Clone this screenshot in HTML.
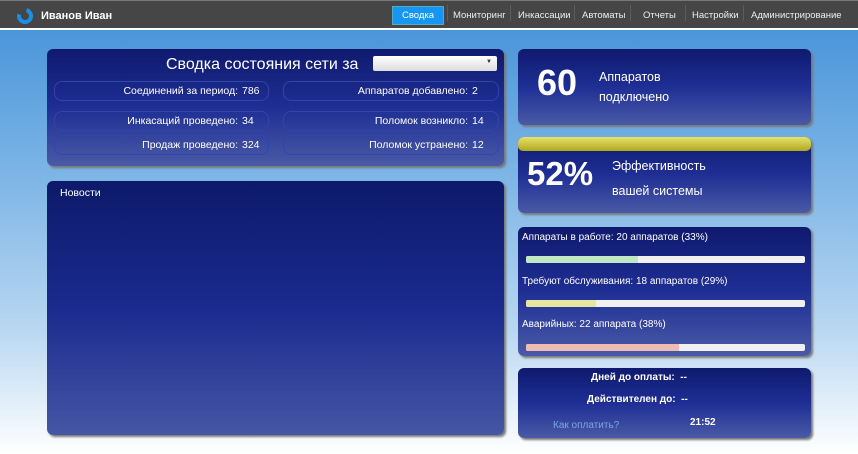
<!DOCTYPE html>
<html><head><meta charset="utf-8"><style>
*{margin:0;padding:0;box-sizing:border-box}
body{width:858px;height:454px;overflow:hidden;font-family:"Liberation Sans","DejaVu Sans",sans-serif;background:linear-gradient(#4b95d9 30px,#7fb6e6 180px,#b9d7f1 330px,#ffffff 454px);position:relative;color:#fff}
.hdr{position:absolute;left:0;top:0;width:858px;height:30px;background:#464646;border-top:1px solid #777;border-bottom:2px solid #fff}
.logo{position:absolute;left:17px;top:7px;width:16px;height:16px;border-radius:50%;border:4px solid #1a8fe6;border-top-color:transparent;transform:rotate(-30deg)}
.name{position:absolute;left:41px;top:9px;font-size:11px;font-weight:bold}
.nav{position:absolute;top:6px;font-size:9.5px;color:#eee}
.nav span{position:absolute;white-space:nowrap;top:4px}
.sep{position:absolute;top:5px;width:1px;height:16px;background:#5c5c5c}
.act{position:absolute;left:392px;top:6px;width:52px;height:19px;background:#1596f2;border:1px solid #5ab;font-size:9.5px;text-align:center;line-height:17px}
.panel{position:absolute;border-radius:6px;background:linear-gradient(#0f1a6e,#1e2e94 50%,#4a5aa6);box-shadow:2px 2px 2px #777}
.cell{position:absolute;height:20px;border:1px solid #3344aa;border-radius:8px;font-size:10.5px;text-align:right;padding-right:30px;line-height:18px}
.cell b{position:absolute;right:6px;font-weight:normal;width:20px;text-align:left}
.bar{position:absolute;left:8px;width:279px;height:7px;background:#f0f0f0;border-radius:2px;overflow:hidden}
.bar i{display:block;height:100%}
.t{position:absolute;font-size:10px;white-space:nowrap}
</style></head><body>
<div class="hdr">
<div class="logo"></div><div class="name">Иванов Иван</div>
</div>
<div class="act">Сводка</div>
<div class="nav" style="left:0"><span style="left:453px">Мониторинг</span><span style="left:518px">Инкассации</span><span style="left:582px">Автоматы</span><span style="left:643px">Отчеты</span><span style="left:692px">Настройки</span><span style="left:751px">Администрирование</span></div>
<div class="sep" style="left:447px"></div><div class="sep" style="left:510px"></div><div class="sep" style="left:574px"></div><div class="sep" style="left:630px"></div><div class="sep" style="left:685px"></div><div class="sep" style="left:743px"></div>

<div class="panel" style="left:47px;top:49px;width:457px;height:117px">
<div class="t" style="left:119px;top:7px;font-size:16px">Сводка состояния сети за</div>
<div style="position:absolute;left:326px;top:7px;width:124px;height:15px;background:linear-gradient(#fff,#ddd);border-radius:2px"><span style="position:absolute;right:5px;top:3px;font-size:6px;color:#333">▼</span></div>
<div class="cell" style="left:7px;top:32px;width:215px">Соединений за период:<b>786</b></div>
<div class="cell" style="left:236px;top:32px;width:216px">Аппаратов добавлено:<b>2</b></div>
<div class="cell" style="left:7px;top:62px;width:215px">Инкасаций проведено:<b>34</b></div>
<div class="cell" style="left:236px;top:62px;width:216px">Поломок возникло:<b>14</b></div>
<div class="cell" style="left:7px;top:86px;width:215px">Продаж проведено:<b>324</b></div>
<div class="cell" style="left:236px;top:86px;width:216px">Поломок устранено:<b>12</b></div>
</div>

<div class="panel" style="left:47px;top:181px;width:457px;height:254px;background:linear-gradient(#0d1a6a,#1a2a8e 50%,#4656a4)">
<div class="t" style="left:13px;top:6px;font-size:10.5px">Новости</div>
</div>

<div class="panel" style="left:518px;top:49px;width:293px;height:76px">
<div class="t" style="left:19px;top:13px;font-size:36px;font-weight:bold">60</div>
<div class="t" style="left:81px;top:18px;font-size:12.5px;line-height:20px">Аппаратов<br>подключено</div>
</div>

<div class="panel" style="left:518px;top:137px;width:293px;height:76px">
<div style="position:absolute;left:0;top:0;width:293px;height:14px;border-radius:6px 6px 5px 5px;background:linear-gradient(#e6e36a,#b0a820)"></div>
<div class="t" style="left:9px;top:18px;font-size:33px;font-weight:bold">52%</div>
<div class="t" style="left:94px;top:17px;font-size:12.5px;line-height:25px">Эффективность<br>вашей системы</div>
</div>

<div class="panel" style="left:518px;top:227px;width:293px;height:129px">
<div class="t" style="left:4px;top:5px">Аппараты в работе: 20 аппаратов (33%)</div>
<div class="bar" style="top:29px"><i style="width:40%;background:#bfe8c4"></i></div>
<div class="t" style="left:4px;top:49px">Требуют обслуживания: 18 аппаратов (29%)</div>
<div class="bar" style="top:73px"><i style="width:25%;background:#e6e6a0"></i></div>
<div class="t" style="left:4px;top:92px">Аварийных: 22 аппарата (38%)</div>
<div class="bar" style="top:117px"><i style="width:55%;background:#eebcb0"></i></div>
</div>

<div class="panel" style="left:518px;top:368px;width:293px;height:70px">
<div class="t" style="left:73px;top:4px;font-weight:bold">Дней до оплаты:&nbsp; --</div>
<div class="t" style="left:69px;top:26px;font-weight:bold">Действителен до:&nbsp; --</div>
<div class="t" style="left:35px;top:52px;color:#7ea6e0">Как оплатить?</div>
<div class="t" style="left:172px;top:49px;font-weight:bold">21:52</div>
</div>
</body></html>
